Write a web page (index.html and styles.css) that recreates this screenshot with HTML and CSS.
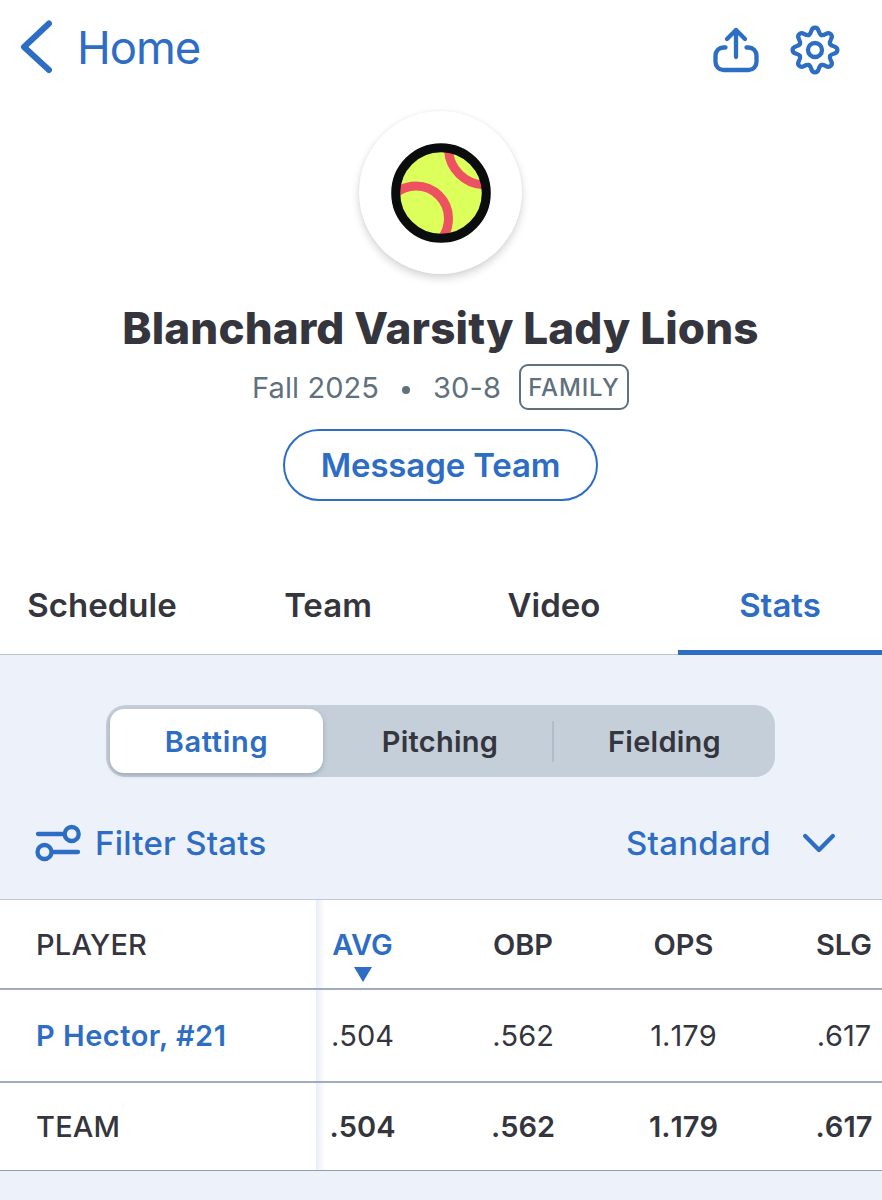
FILE: index.html
```html
<!DOCTYPE html>
<html lang="en">
<head>
    <meta charset="UTF-8">
    <meta name="viewport" content="width=device-width, initial-scale=1.0">
    <title>Blanchard Varsity Lady Lions</title>
    <link rel="stylesheet" href="styles.css">
</head>
<body>
    <header class="top-bar">
        <a class="back" href="#">
            <svg class="back-icon" width="36" height="60" viewBox="0 0 36 60">
                <path d="M31 6.500 6 30l25 23"/>
            </svg>
            <span>Home</span>
        </a>
        <div class="top-actions">
            <svg width="50" height="50" viewBox="0 0 50 50">
                <path d="M25 32V5M16 14l9-9 9 9"/>
                <path d="M14.500 22.500h-2a8 8 0 0 0-8 8v6.500a8 8 0 0 0 8 8h25a8 8 0 0 0 8-8v-6.500a8 8 0 0 0-8-8h-2"/>
            </svg>
            <svg class="gear" width="52" height="52" viewBox="-26 -26 52 52">
                <defs>
                    <path id="tooth" d="M-6.200-15C-2.600-16.500-5-22.400 0-22.400S2.600-16.500 6.200-15"/>
                </defs>
                <use href="#tooth"/>
                <use href="#tooth" transform="rotate(45)"/>
                <use href="#tooth" transform="rotate(90)"/>
                <use href="#tooth" transform="rotate(135)"/>
                <use href="#tooth" transform="rotate(180)"/>
                <use href="#tooth" transform="rotate(225)"/>
                <use href="#tooth" transform="rotate(270)"/>
                <use href="#tooth" transform="rotate(315)"/>
                <circle r="7"/>
            </svg>
        </div>
    </header>

    <section class="team">
        <div class="avatar">
            <svg width="100" height="100" viewBox="0 0 100 100">
                <clipPath id="ball"><circle cx="50" cy="50" r="43"/></clipPath>
                <circle cx="50" cy="50" r="43" fill="#dcff5c"/>
                <g clip-path="url(#ball)" fill="none" stroke="#ee5260" stroke-width="9">
                    <circle cx="25" cy="75.500" r="32.500"/>
                    <circle cx="94.500" cy="5" r="37"/>
                </g>
                <circle cx="50" cy="50" r="45.300" fill="none" stroke="#0b0c0e" stroke-width="9"/>
            </svg>
        </div>
        <h1 class="team-name">Blanchard Varsity Lady Lions</h1>
        <div class="team-info">
            <span>Fall 2025</span>
            <span class="dot"></span>
            <span>30-8</span>
            <span class="tag">FAMILY</span>
        </div>
        <button class="message-btn">Message Team</button>
    </section>

    <nav class="tabs">
        <a class="tab" href="#">Schedule</a>
        <a class="tab" href="#">Team</a>
        <a class="tab" href="#">Video</a>
        <a class="tab active" href="#">Stats</a>
    </nav>

    <section class="controls">
        <div class="segments">
            <button class="segment selected">Batting</button>
            <button class="segment">Pitching</button>
            <button class="segment divided">Fielding</button>
        </div>
        <div class="filters">
            <a class="filter" href="#">
                <svg width="46" height="38" viewBox="0 0 46 38">
                    <path d="M3 10h25M18 28h25"/>
                    <circle cx="36.700" cy="10" r="7"/>
                    <circle cx="9.500" cy="28" r="7"/>
                </svg>
                <span class="filter-text">Filter Stats</span>
            </a>
            <a class="sort" href="#">
                <span class="sort-text">Standard</span>
                <svg width="34" height="20" viewBox="0 0 34 20">
                    <path d="M3.200 3 17 17 30.800 3"/>
                </svg>
            </a>
        </div>
    </section>

    <section class="stats">
        <div class="row head">
            <div class="player">PLAYER</div>
            <div class="values">
                <span class="sorted">AVG</span>
                <span>OBP</span>
                <span>OPS</span>
                <span>SLG</span>
            </div>
        </div>
        <div class="row">
            <div class="player link">P Hector, #21</div>
            <div class="values">
                <span>.504</span>
                <span>.562</span>
                <span>1.179</span>
                <span>.617</span>
            </div>
        </div>
        <div class="row total">
            <div class="player">TEAM</div>
            <div class="values">
                <span>.504</span>
                <span>.562</span>
                <span>1.179</span>
                <span>.617</span>
            </div>
        </div>
    </section>
</body>
</html>
```
FILE: styles.css
```css
* {
    margin: 0;
    padding: 0;
    box-sizing: border-box;
    font-family: 'Inter', sans-serif;
}

body {
    width: 882px;
    height: 1200px;
    background-color: #edf2fa;
    color: #35363d;
    overflow: hidden;
}

a {
    color: #2e6dc4;
    text-decoration: none;
}

svg {
    display: block;
    flex: none;
}

/* Top bar */
.top-bar {
    display: flex;
    justify-content: space-between;
    height: 100px;
    padding: 17px 41px 0 18px;
    background-color: #fff;
}

.back {
    display: flex;
    align-items: center;
    gap: 23px;
    height: 60px;
    font-size: 45.5px;
    letter-spacing: -1.1px;
}

.top-bar svg,
.filters svg {
    fill: none;
    stroke: #2e6dc4;
    stroke-width: 4.3;
    stroke-linecap: round;
    stroke-linejoin: round;
}

.top-bar .back-icon {
    stroke-width: 6;
}

.top-actions {
    display: flex;
    gap: 28.5px;
    padding-top: 8px;
}

.gear {
    margin-top: -1px;
}

/* Team header */
.team {
    display: flex;
    flex-direction: column;
    align-items: center;
    height: 454px;
    padding: 11px 1px 0 0;
    background-color: #fff;
}

.avatar {
    display: flex;
    align-items: center;
    justify-content: center;
    width: 163px;
    height: 163px;
    border-radius: 50%;
    box-shadow: 0 4px 8px rgba(0, 0, 0, 0.17), 0 0 3px rgba(0, 0, 0, 0.05);
}

.team-name {
    margin-top: 27px;
    font-size: 44px;
    font-weight: 800;
    line-height: 54px;
    letter-spacing: 0.15px;
    white-space: nowrap;
}

.team-info {
    display: flex;
    align-items: center;
    height: 46px;
    margin-top: 9px;
    font-size: 29px;
    letter-spacing: 0.1px;
    color: #5f717d;
}

.dot {
    width: 8px;
    height: 8px;
    margin: 5px 23px 0;
    border-radius: 50%;
    background-color: #5f717d;
}

.tag {
    width: 110px;
    height: 46px;
    margin-left: 18px;
    border: 2px solid #5f717d;
    border-radius: 9px;
    font-size: 24px;
    font-weight: 500;
    line-height: 43px;
    letter-spacing: 0.8px;
    text-align: center;
}

.message-btn {
    width: 315px;
    height: 72px;
    margin-top: 19px;
    border: 2px solid #2e6dc4;
    border-radius: 36px;
    background-color: #fff;
    color: #2e6dc4;
    font-size: 33px;
    font-weight: 600;
    letter-spacing: -0.15px;
}

/* Tabs */
.tabs {
    display: grid;
    grid-template-columns: repeat(4, 204px);
    justify-content: space-between;
    height: 101px;
    background-color: #fff;
    border-bottom: 1px solid #bcc4d0;
}

.tab {
    height: 101px;
    color: #35363d;
    font-size: 33px;
    font-weight: 600;
    line-height: 102px;
    text-align: center;
}

.tab.active {
    color: #2e6dc4;
    border-bottom: 5px solid #2e6dc4;
}

/* Segmented control and filters */
.controls {
    height: 244px;
    padding-top: 50px;
}

.segments {
    display: grid;
    grid-template-columns: 218px 224px 223px;
    align-items: center;
    width: 669px;
    height: 72px;
    margin-left: 106px;
    padding-left: 4px;
    border-radius: 20px;
    background-color: #c5cfda;
}

.segment {
    height: 64px;
    border: none;
    background: none;
    color: #35363d;
    font-size: 29px;
    font-weight: 600;
    letter-spacing: 0.25px;
}

.segment.selected {
    margin-right: 5px;
    border-radius: 14px;
    background-color: #fff;
    color: #2e6dc4;
    letter-spacing: 0.7px;
    box-shadow: 0 2px 5px rgba(60, 75, 100, 0.3);
}

.segment.divided {
    height: 41px;
    border-left: 2px solid #b3bdc9;
}

.filters {
    display: flex;
    align-items: center;
    justify-content: space-between;
    height: 60px;
    margin-top: 36px;
    padding: 0 46px 0 35px;
    font-size: 33px;
    font-weight: 500;
    letter-spacing: 0.25px;
}

.filter {
    display: flex;
    align-items: center;
    gap: 14px;
}

.sort {
    display: flex;
    align-items: center;
    gap: 31px;
}

/* Stats table */
.stats {
    background-color: #fff;
    border-top: 1px solid #bfc8d4;
}

.row {
    display: flex;
    height: 93px;
    border-bottom: 2px solid #9facbf;
    font-size: 29px;
    line-height: 92px;
}

.row.head {
    height: 90px;
    font-weight: 600;
    line-height: 90px;
}

.row.total {
    height: 88px;
    border-bottom: 1px solid #8f9db3;
    font-weight: 600;
    line-height: 88px;
}

.player {
    flex: none;
    width: 316px;
    padding-left: 36px;
    font-weight: 500;
    letter-spacing: 0.2px;
}

.player.link {
    color: #2e6dc4;
    font-weight: 600;
    letter-spacing: 0.5px;
}

.values {
    display: flex;
    flex: 1;
    gap: 69.5px;
    padding-left: 1px;
    overflow: hidden;
    font-kerning: none;
    background: linear-gradient(to right, #e9eef5, #fff 9px);
}

.head .values {
    font-kerning: auto;
}

.values span {
    flex: none;
    width: 91px;
    text-align: center;
}

.values .sorted {
    position: relative;
    color: #2e6dc4;
}

.sorted::after {
    content: "";
    position: absolute;
    left: 37px;
    bottom: 6px;
    border: 9px solid transparent;
    border-top: 15px solid #2e6dc4;
    border-bottom: none;
}
```
